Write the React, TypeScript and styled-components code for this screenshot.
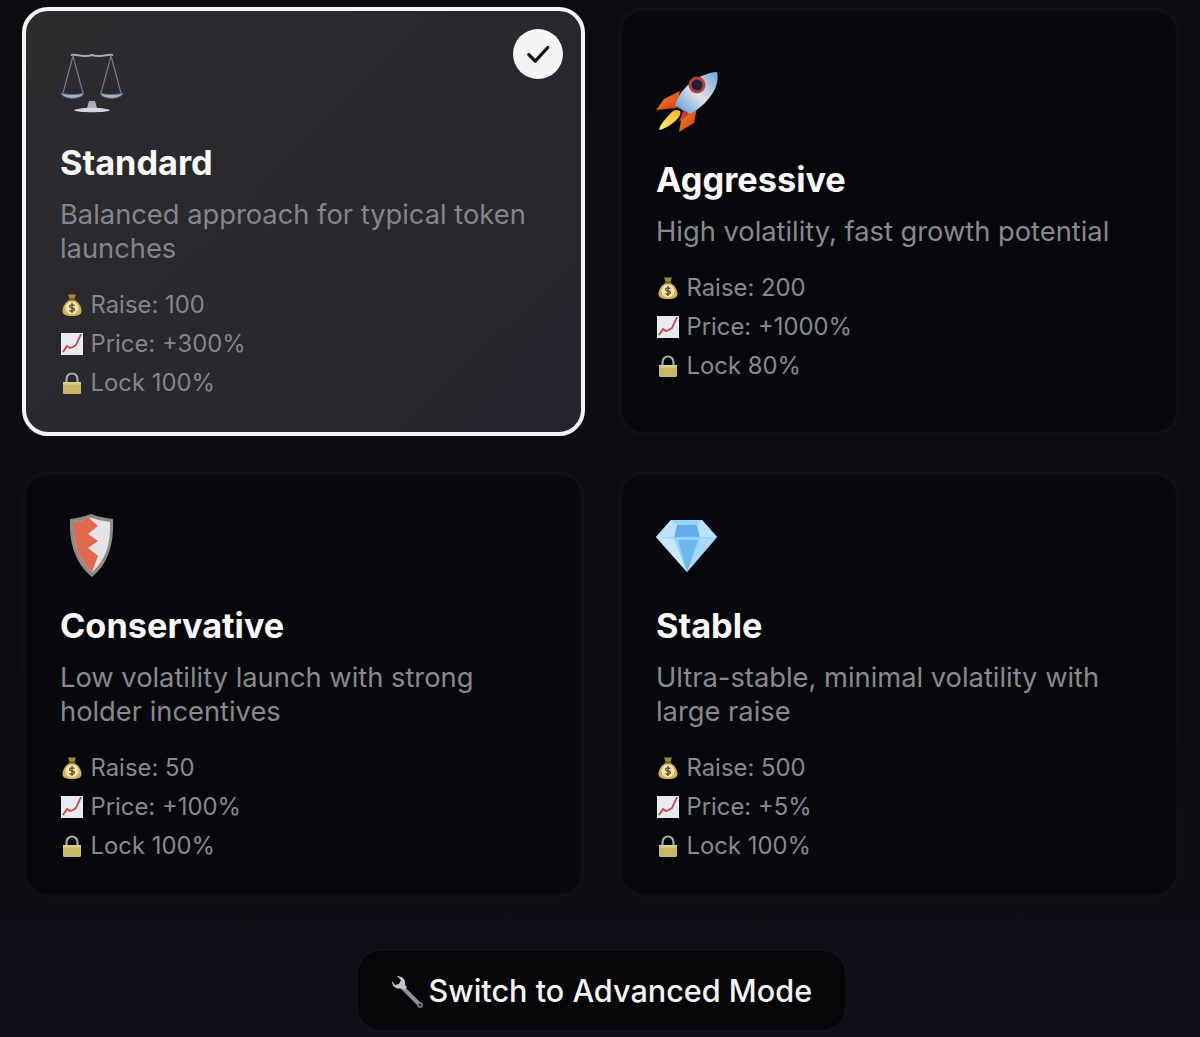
import React from 'react';
import styled, { createGlobalStyle } from 'styled-components';

const Global = createGlobalStyle`
  html, body { margin: 0; padding: 0; background: #0d0c11; }
  body { font-family: Inter, "Liberation Sans", sans-serif; }
  * { box-sizing: border-box; }
`;

const Page = styled.div`
  width: 1200px;
  height: 1037px;
  overflow: hidden;
  padding: 7px 20px 0 22px;
  background: linear-gradient(180deg, #0c0c10 0%, #0e0c13 60%, #110e17 100%);
`;

const Grid = styled.div`
  display: grid;
  grid-template-columns: 563px 562px;
  grid-template-rows: 429px 427px;
  column-gap: 33px;
  row-gap: 35px;
`;

const Card = styled.div<{ $selected?: boolean }>`
  position: relative;
  display: flex;
  flex-direction: column;
  justify-content: center;
  padding: 6px 36px 0 34px;
  border-radius: 26px;
  border: 4px solid ${p => (p.$selected ? '#f4f4f5' : '#101014')};
  background: ${p => (p.$selected ? 'linear-gradient(135deg, #2c2b2e 0%, #29282c 50%, #26252e 100%)' : '#07080c')};
`;

const IconWrap = styled.div`
  width: 64px;
  height: 64px;
  margin-bottom: 28px;
  svg { display: block; width: 64px; height: 64px; }
`;

const Title = styled.h3`
  margin: 0 0 15px;
  font-size: 34.3px;
  line-height: 40px;
  font-weight: 700;
  color: #f8f8f8;
`;

const Desc = styled.p<{ $selected?: boolean }>`
  margin: 0 0 24px;
  font-size: 27.3px;
  line-height: 33.5px;
  font-weight: 400;
  color: ${p => (p.$selected ? '#85858a' : '#89898e')};
`;

const Stats = styled.div`
  display: flex;
  flex-direction: column;
  gap: 8px;
`;

const Stat = styled.div<{ $selected?: boolean }>`
  display: flex;
  align-items: center;
  gap: 6.5px;
  font-size: 23.85px;
  line-height: 31px;
  color: ${p => (p.$selected ? '#85858a' : '#89898e')};
  svg { display: block; width: 24px; height: 24px; flex: none; }
`;

const Check = styled.div`
  position: absolute;
  top: 18px;
  right: 18px;
  width: 50px;
  height: 50px;
  border-radius: 50%;
  background: #f5f5f5;
  display: flex;
  align-items: center;
  justify-content: center;
  svg { display: block; }
`;

const Footer = styled.div`
  display: flex;
  justify-content: center;
  margin-top: 50px;
`;

const SwitchButton = styled.button`
  display: flex;
  align-items: center;
  gap: 5px;
  height: 85px;
  width: 493px;
  padding: 0 0 0 32px;
  border-radius: 26px;
  border: 3px solid #121116;
  background: #060608;
  color: #f5f5f5;
  font-family: inherit;
  font-size: 30.6px;
  font-weight: 500;
  white-space: nowrap;
  svg { display: block; width: 34px; height: 34px; flex: none; }
`;

const Scales = () => (
  <svg viewBox="0 0 64 64" fill="none">
    <defs>
      <linearGradient id="sc" x1="0" x2="0" y1="0" y2="1"><stop offset="0" stopColor="#8d93a0" /><stop offset="1" stopColor="#c9d0dc" /></linearGradient>
    </defs>
    <path d="M32 0v55" stroke="url(#sc)" strokeWidth="3" />
    <path d="M11 4c7-1 14 3 21 0 7 3 14-1 21 0" stroke="#a4a9b3" strokeWidth="2" />
    <path d="M13 5L3 42M13 5l10 37M51 5L41 42M51 5l10 37" stroke="#777c88" strokeWidth="1.2" />
    <path d="M1 42c5 2 18 2 23 0-2 7-21 7-23 0zM40 42c5 2 18 2 23 0-2 7-21 7-23 0z" fill="#a9b2c2" stroke="#5d6d88" strokeWidth="1" />
    <path d="M29 50h6l2 7h-10z" fill="#a8aeb9" />
    <path d="M14 59c8-3 28-3 36 0 0 3-36 3-36 0z" fill="#cfd6e0" />
  </svg>
);

const Rocket = () => (
  <svg viewBox="0 -2 64 64">
    <defs>
      <linearGradient id="rb" x1="0" x2="1" y1="1" y2="0"><stop offset="0" stopColor="#4f8fd8" /><stop offset=".5" stopColor="#e2e4e8" /><stop offset="1" stopColor="#6ea4dc" /></linearGradient>
      <linearGradient id="rf" x1="0" x2="1" y1="0" y2="1"><stop offset="0" stopColor="#f2901f" /><stop offset="1" stopColor="#dc2f1c" /></linearGradient>
      <linearGradient id="rh" x1="0" x2="1" y1="1" y2="0"><stop offset="0" stopColor="#fff27e" /><stop offset="1" stopColor="#f5b21f" /></linearGradient>
    </defs>
    <path d="M24 21L8 29 0 40l20-2z" fill="url(#rf)" />
    <path d="M41 38l-3 15-15 9 3-17z" fill="url(#rf)" />
    <path d="M14 44c3-4 7-5 10-3 2 3-2 8-7 12-4 3-9 6-14 7 1-5 6-11 11-16z" fill="url(#rh)" />
    <path d="M19 36C22 20 42 3 61 2c4 15-10 33-27 42z" fill="url(#rb)" />
    <path d="M19 35l14 9-10 8 4-11z" fill="#c03a2e" />
    <circle cx="41" cy="15" r="8.500" fill="#b3433f" />
    <circle cx="41" cy="15" r="5.500" fill="#241f38" />
  </svg>
);

const Shield = () => (
  <svg viewBox="0 0 64 64">
    <path d="M31 0c8 3 15 4 22 5 1 24-4 44-21 58C15 49 9 29 10 5c7-1 13-2 21-5z" fill="#8d8b8a" />
    <path d="M31 4c7 2 13 3 19 4 1 21-4 38-18 50C18 46 13 29 14 8c6-1 10-2 17-4z" fill="#e4e4e8" />
    <path d="M29 4L38 12 28 20 38 27 28 34 38 42 32 58C18 46 13 29 14 8 19 7 24 6 29 4z" fill="#de6a4e" />
  </svg>
);

const Diamond = () => (
  <svg viewBox="0 0 64 64">
    <path d="M15 6h31l15 17-30 35L0 23z" fill="#9ad3f9" />
    <path d="M21 11h20l3 12H18z" fill="#62aeec" />
    <path d="M22 26h20L31 58z" fill="#6ab8f2" />
    <path d="M0 23l18 2 13 33z" fill="#c8e9fc" />
    <path d="M61 23l-17 2-13 33z" fill="#a6d9fa" />
    <path d="M15 6L0 23h18l3-12zM46 6l15 17H44l-3-12z" fill="#bde2fb" />
  </svg>
);

const Bag = () => (
  <svg viewBox="0 0 24 24">
    <path d="M8 1.500h8l-2 5h-4z" fill="#a98a3a" />
    <path d="M9.500 7c-4 2-7 7-7 11 0 3.500 3 5 9.500 5s9.500-1.500 9.500-5c0-4-3-9-7-11z" fill="#d4b252" />
    <rect x="8.500" y="5.500" width="7" height="2" rx="1" fill="#6e5a26" />
    <circle cx="12" cy="15" r="6.500" fill="#f2e6b4" />
    <path d="M14.500 12.500c-1-1-5-1-5 1s5 1 5 3-4 2-5 1M12 10v10" stroke="#5a4a1c" strokeWidth="1.300" fill="none" />
  </svg>
);

const Chart = () => (
  <svg viewBox="0 0 24 24">
    <rect x="1" y="1" width="22" height="22" fill="#e9e9ee" />
    <path d="M3 20l4-6 3 2 3-1 3-2 5-11" stroke="#c9403c" strokeWidth="1.800" fill="none" />
  </svg>
);

const Lock = () => (
  <svg viewBox="0 0 24 24">
    <path d="M6.500 12V8a5.500 5.500 0 0 1 11 0v4" stroke="#a8a8a8" strokeWidth="2.200" fill="none" />
    <rect x="3" y="11" width="18" height="12" rx="1.500" fill="#c9b766" />
    <rect x="3" y="11" width="18" height="2.500" fill="#ddd08a" />
  </svg>
);

const Wrench = () => (
  <svg viewBox="0 0 34 34">
    <path d="M11 12L30 31" stroke="#8e9196" strokeWidth="4" fill="none" />
    <path d="M2 7c0 6 5 9 10 7l2 2 3-3-2-2c1-5-2-9-8-9l4 4-2 4-4 1z" fill="#c3c6cb" />
    <circle cx="30" cy="31" r="3" fill="#75787e" />
    <circle cx="30" cy="31" r="1.200" fill="#222" />
  </svg>
);

type Preset = { key: string; icon: React.ReactNode; title: string; desc: string; raise: string; price: string; lock: string; selected?: boolean };

const presets: Preset[] = [
  { key: 'std', icon: <Scales />, title: 'Standard', desc: 'Balanced approach for typical token launches', raise: '100', price: '+300%', lock: '100%', selected: true },
  { key: 'agg', icon: <Rocket />, title: 'Aggressive', desc: 'High volatility, fast growth potential', raise: '200', price: '+1000%', lock: '80%' },
  { key: 'con', icon: <Shield />, title: 'Conservative', desc: 'Low volatility launch with strong holder incentives', raise: '50', price: '+100%', lock: '100%' },
  { key: 'stb', icon: <Diamond />, title: 'Stable', desc: 'Ultra-stable, minimal volatility with large raise', raise: '500', price: '+5%', lock: '100%' },
];

export default function App() {
  return (
    <Page>
      <Global />
      <Grid>
        {presets.map(p => (
          <Card key={p.key} $selected={p.selected}>
            {p.selected && (
              <Check>
                <svg width="26" height="26" viewBox="0 0 24 24" fill="none" stroke="#111" strokeWidth="3" strokeLinecap="round" strokeLinejoin="round">
                  <path d="M3.500 12.500l6 6L21 6" />
                </svg>
              </Check>
            )}
            <IconWrap>{p.icon}</IconWrap>
            <Title>{p.title}</Title>
            <Desc $selected={p.selected}>{p.desc}</Desc>
            <Stats>
              <Stat $selected={p.selected}><Bag />Raise: {p.raise}</Stat>
              <Stat $selected={p.selected}><Chart />Price: {p.price}</Stat>
              <Stat $selected={p.selected}><Lock />Lock {p.lock}</Stat>
            </Stats>
          </Card>
        ))}
      </Grid>
      <Footer>
        <SwitchButton><Wrench />Switch to Advanced Mode</SwitchButton>
      </Footer>
    </Page>
  );
}
